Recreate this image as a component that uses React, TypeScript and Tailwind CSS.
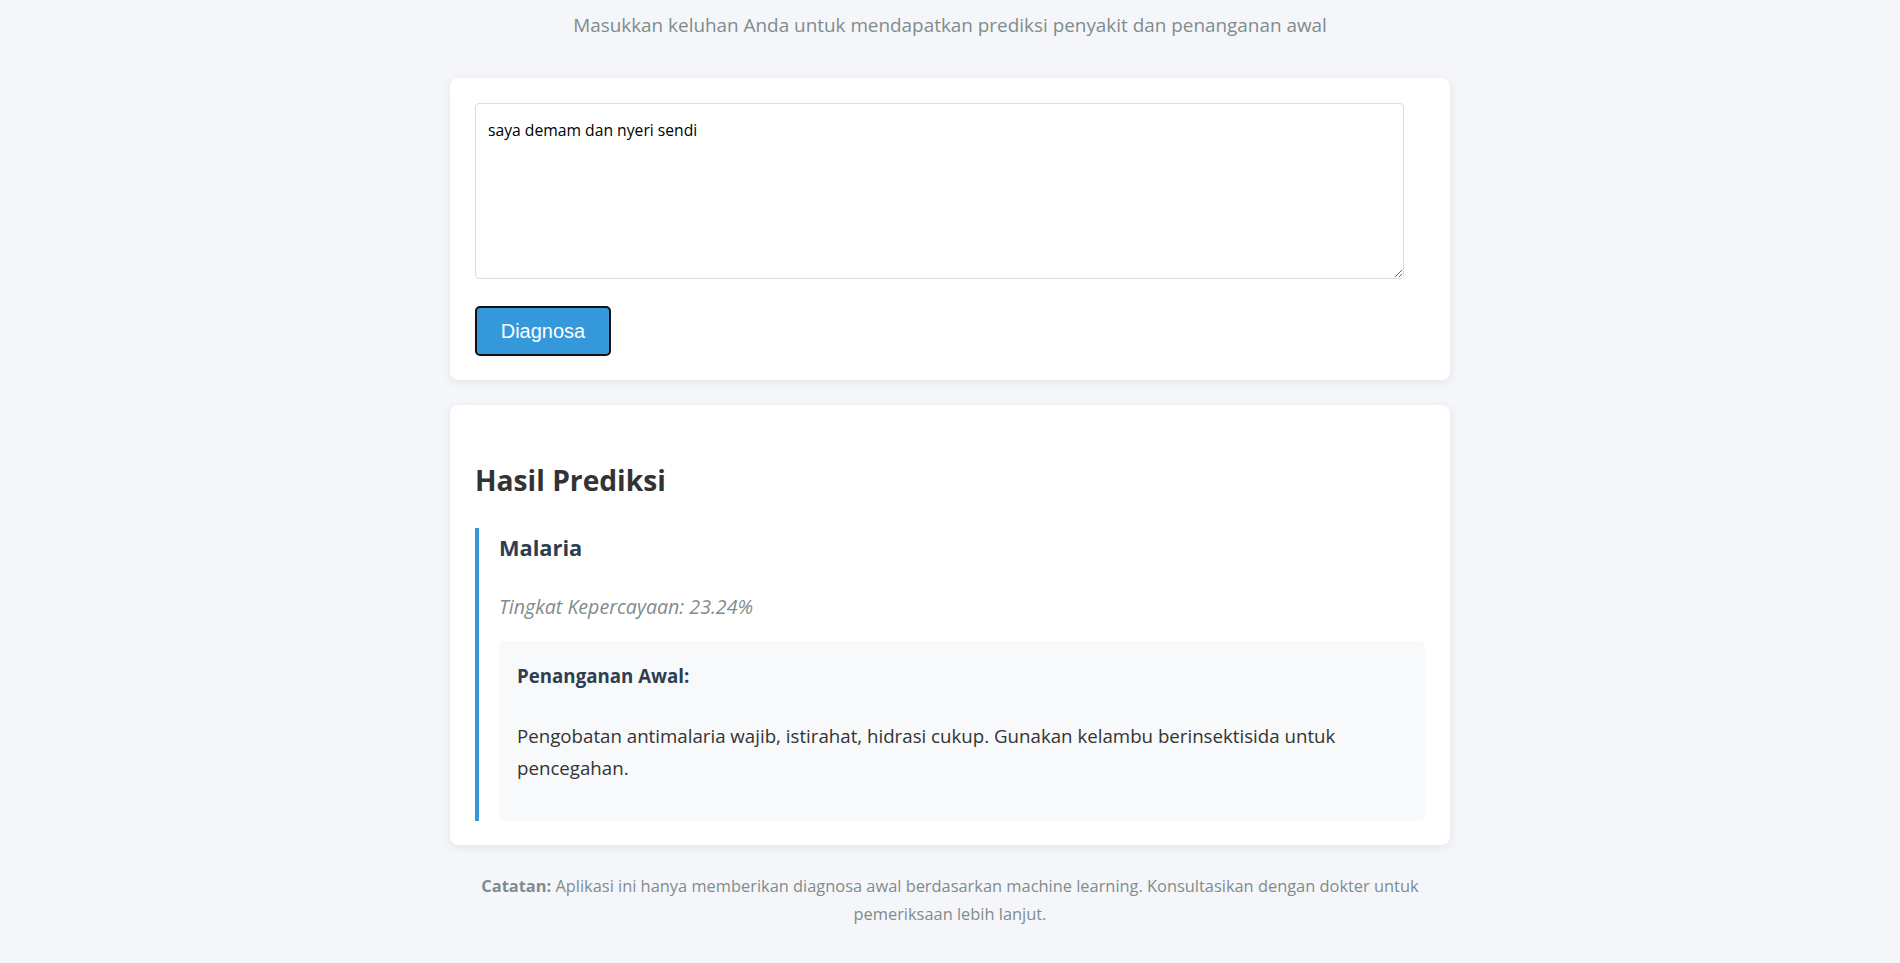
export default function App() {
  return (
    <div className="min-h-screen bg-[#f5f6fa] font-['Open_Sans','Noto_Sans',sans-serif]">
      <div className="mx-auto w-[1000px]">
        <p className="pt-[11px] text-center text-[18.9px] leading-[28px] text-[#7f8c8d]">
          Masukkan keluhan Anda untuk mendapatkan prediksi penyakit dan penanganan awal
        </p>

        <div className="mt-[39px] rounded-lg bg-white px-[25px] pt-[25px] pb-[24px] shadow-[0_2px_10px_rgba(0,0,0,0.08)]">
          <textarea
            className="block h-[176px] w-[929px] rounded border border-[#dddddd] px-[12px] py-[15px] text-[15.7px] leading-[22px] text-black outline-none"
            defaultValue="saya demam dan nyeri sendi"
          />
          <button className="mt-[27px] h-[50px] w-[136px] rounded-[5px] border-2 border-[#111111] bg-[#3498db] font-['Liberation_Sans',Arial,sans-serif] text-[20px] text-white">
            Diagnosa
          </button>
        </div>

        <div className="mt-[25px] rounded-lg bg-white px-[25px] pt-[25px] pb-[24px] shadow-[0_2px_10px_rgba(0,0,0,0.08)]">
          <h2 className="mt-[32px] text-[28.2px] leading-[36px] font-bold text-[#333333]">Hasil Prediksi</h2>

          <div className="mt-[30px] border-l-4 border-[#3498db] pl-[20px]">
            <h3 className="pt-[6px] text-[21.8px] leading-[28px] font-bold text-[#2c3e50]">Malaria</h3>
            <p className="mt-[32px] text-[19.6px] leading-[26px] italic text-[#7f8c8d]">
              Tingkat Kepercayaan: 23.24%
            </p>
            <div className="mt-[21px] rounded-md bg-[#f8f9fa] px-[18px] pt-[22px] pb-[37px]">
              <p className="text-[18.7px] leading-[26px] font-bold text-[#2c3e50]">Penanganan Awal:</p>
              <p className="mt-[31px] max-w-[860px] text-[18.7px] leading-[32px] text-[#333333]">
                Pengobatan antimalaria wajib, istirahat, hidrasi cukup. Gunakan kelambu berinsektisida untuk pencegahan.
              </p>
            </div>
          </div>
        </div>

        <p className="mt-[27px] px-[20px] text-center text-[16.4px] leading-[28px] text-[#7f8c8d]">
          <strong className="font-bold">Catatan:</strong> Aplikasi ini hanya memberikan diagnosa awal berdasarkan machine
          learning. Konsultasikan dengan dokter untuk pemeriksaan lebih lanjut.
        </p>
      </div>
    </div>
  );
}
